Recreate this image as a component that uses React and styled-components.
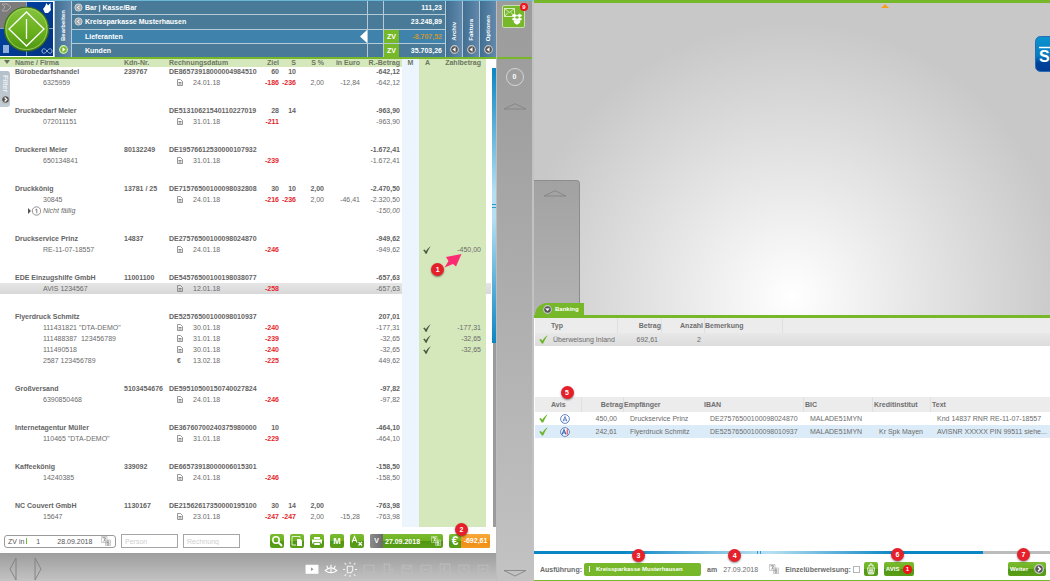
import React from 'react';
import styled, { createGlobalStyle, css } from 'styled-components';

const green = '#76b82a';
const sans = '"Liberation Sans", Arial, sans-serif';

const Global = createGlobalStyle`
  *, *::before, *::after { box-sizing: border-box; }
  body { margin: 0; background: #fff; font: 7px/11px ${sans}; color: #6b6b6b; }
  button, input { font: inherit; color: inherit; margin: 0; padding: 0; border: 0; background: none; border-radius: 0; }
  button { cursor: pointer; }
  svg { display: block; flex: none; }
`;

const Page = styled.div`
  display: grid;
  grid-template-columns: minmax(0, 496fr) 38px minmax(0, 516fr);
  min-height: 100vh;
  overflow: hidden;
`;

/* ---------- left panel ---------- */

const Ledger = styled.section`
  display: flex;
  flex-direction: column;
  min-width: 0;
`;

const TopBar = styled.header`
  display: flex;
  height: 59px;
  border-top: 1px solid #6bb7d6;
  border-bottom: 2px solid ${green};
  background: #b5cbd8;
`;

const LogoBlock = styled.div`
  width: 54px;
  background: #fff;
`;

const SideTab = styled.button`
  display: flex;
  flex-direction: column;
  align-items: center;
  justify-content: flex-end;
  gap: 4px;
  width: 16px;
  padding-bottom: 3px;
  margin-left: 1px;
  background: linear-gradient(90deg, #426f91, #6189ad);
  color: #fff;
  font-size: 6px;
  font-weight: bold;
  line-height: 8px;
`;

const UpText = styled.span`
  writing-mode: vertical-rl;
  transform: rotate(180deg);
`;

const Accounts = styled.div`
  flex: 1;
  display: flex;
  flex-direction: column;
  gap: 1px;
  margin-left: 1px;
`;

const AccountRow = styled.button`
  flex: 1;
  display: grid;
  grid-template-columns: 13px minmax(0, 1fr) 16px 16px 46px;
  align-items: stretch;
  text-align: left;
  background: ${(p) => (p.$active ? '#3f83ac' : '#497a97')};
  color: #fff;
  font-weight: bold;
  line-height: 13px;
`;

const AccountIcon = styled.span`
  display: flex;
  align-items: center;
  justify-content: center;
`;

const Divided = styled.span`
  border-left: 1px solid #b5cbd8;
`;

const AccountName = styled.span`
  display: flex;
  justify-content: space-between;
`;

const Zv = styled.span`
  background: ${(p) => (p.$on ? green : 'transparent')};
  border-left: 1px solid #b5cbd8;
  text-align: center;
`;

const Amount = styled.span`
  text-align: right;
  padding-right: 3px;
  color: ${(p) => (p.$warn ? '#c99636' : '#fff')};
`;

const LedgerBody = styled.div`
  position: relative;
  flex: 1;
  display: flex;
`;

const TableWrap = styled.div`
  flex: 1;
  min-width: 0;
  background: linear-gradient(to left, #fff 5px, #d5e8bb 5px 72px, #ecf5fd 72px 89px, #fff 89px);
`;

const LedgerTable = styled.table`
  width: 100%;
  table-layout: fixed;
  border-collapse: collapse;
  th, td { padding: 0; white-space: nowrap; text-align: right; vertical-align: bottom; }
`;

const HeadCell = styled.th`
  && {
    text-align: ${(p) => p.$align || 'right'};
    padding-left: ${(p) => p.$left || 0}px;
    padding-right: ${(p) => p.$right || 0}px;
  }
  height: 8px;
  line-height: 8px;
  color: #6b7660;
  background: ${(p) => p.$bg || '#d5e8bb'};
`;

const SortMark = styled.span`
  display: inline-block;
  margin: 0 5px 1px 4px;
  border: 3px solid transparent;
  border-top: 4px solid #66705c;
  border-bottom: 0;
`;

const Cell = styled.td`
  && {
    text-align: ${(p) => p.$align || 'right'};
    padding-left: ${(p) => p.$left || 0}px;
    padding-right: ${(p) => p.$right || 0}px;
  }
  color: ${(p) => (p.$red ? '#e5252c' : 'inherit')};
  font-weight: ${(p) => (p.$red ? 'bold' : 'inherit')};
`;

const PartnerRow = styled.tr`
  height: ${(p) => (p.$first ? 10 : 28)}px;
  font-weight: bold;
  line-height: ${(p) => (p.$first ? 10 : 11)}px;
  color: #646464;
`;

const ItemRow = styled.tr`
  height: 11px;
  font-style: ${(p) => (p.$note ? 'italic' : 'normal')};
  ${(p) => p.$selected && css`
    td { background: linear-gradient(#e6e6e6, #d8d8d8); }
    td:nth-child(9) { background: #ecf5fd; }
    td:nth-child(10), td:nth-child(11) { background: #d5e8bb; }
  `}
`;

const DateLine = styled.span`
  display: flex;
  align-items: center;
  padding-left: 8px;
`;

const KindSlot = styled.b`
  width: 16px;
`;

const NoteLine = styled.span`
  display: flex;
  align-items: center;
  padding-left: 27px;
  gap: 2px;
`;

const CheckSlot = styled.span`
  display: flex;
  align-items: center;
  height: 11px;
  padding-left: 4px;
`;

const PayCell = styled.span`
  position: relative;
`;

const FilterTab = styled.button`
  position: absolute;
  left: 0;
  top: 12px;
  display: flex;
  flex-direction: column;
  align-items: center;
  justify-content: space-between;
  width: 10px;
  height: 36px;
  padding: 4px 0 3px;
  border-radius: 0 3px 3px 0;
  background: linear-gradient(#b4c0ca, #c2ccd4);
  color: #eef2f5;
  font-weight: bold;
  line-height: 8px;
  span { writing-mode: vertical-rl; }
`;

const VTrack = styled.div`
  display: flex;
  flex-direction: column;
  width: 5px;
  margin-top: 9px;
  padding-left: 1px;
  background: linear-gradient(90deg, #fff 2px, #9b9b9b 2px);
`;

const VThumb = styled.div`
  display: flex;
  flex-direction: column;
  justify-content: center;
  height: 60%;
  background: linear-gradient(#0b86c4, #b4def1 45%, #b4def1 55%, #0b86c4);
  &::after {
    content: '';
    height: 4px;
    border: solid #2d9bd0;
    border-width: 1px 0;
  }
`;

const ToolBar = styled.form`
  display: flex;
  align-items: center;
  height: 26px;
  padding: 2px 6px 0 4px;
`;

const ZvBox = styled.div`
  display: flex;
  align-items: center;
  width: 112px;
  height: 13px;
  padding: 0 3px;
  border: 1px solid #9a9a9a;
  border-radius: 3px;
  color: #555;
  white-space: nowrap;
`;

const GreenTick = styled.span`
  width: 1px;
  height: 6px;
  margin: 0 9px 0 2px;
  background: ${green};
`;

const PlainInput = styled.input`
  width: ${(p) => p.$w}px;
  height: 11px;
  outline: 0;
  margin-right: ${(p) => p.$gap || 0}px;
`;

const IconButton = styled.button`
  display: flex;
`;

const SearchInput = styled.input`
  && {
    width: 57px;
    height: 14px;
    margin-left: 5px;
    padding: 0 3px;
    border: 1px solid #a5a5a5;
  }
  &::placeholder { color: #cfcfcf; opacity: 1; }
`;

const Actions = styled.div`
  display: flex;
  gap: 6px;
  margin-left: auto;
`;

const greenFace = css`
  background: linear-gradient(#7cbb32, #6bb01e 50%, #519614 52%, #5b9f18);
  color: #fff;
  border-radius: 2px;
`;

const ToolButton = styled.button`
  && { ${greenFace} }
  display: flex;
  align-items: center;
  justify-content: center;
  width: 14px;
  height: 14px;
  && { font-size: 9px; font-weight: bold; }
`;

const DateButton = styled.button`
  && { ${greenFace} font-weight: bold; }
  display: flex;
  align-items: center;
  width: 73px;
  height: 14px;
  overflow: hidden;
  span { flex: 1; text-align: left; padding-left: 2px; }
  svg { margin-right: 2px; }
`;

const ModeMark = styled.b`
  width: 13px;
  line-height: 14px;
  background: linear-gradient(90deg, #8b8b8b, #6b6b6b);
`;

const PayButton = styled.button`
  && { ${greenFace} font-weight: bold; line-height: 14px; }
  position: relative;
  display: flex;
  width: 41px;
  height: 14px;
`;

const EuroMark = styled.span`
  width: 12px;
  font-size: 12px;
`;

const PayTotal = styled.span`
  flex: 1;
  background: linear-gradient(#f8a93d, #f59a1f 50%, #f08a10 52%, #f39a22);
  border-radius: 0 2px 2px 0;
`;

const Dock = styled.footer`
  display: flex;
  align-items: center;
  justify-content: space-between;
  height: 28px;
  padding: 4px 6px 0 9px;
  background: linear-gradient(#9d9d9d, #c3c3c3);
`;

const DockArrows = styled.div`
  display: flex;
  gap: 17px;
`;

const DockIcons = styled.div`
  display: flex;
  align-items: center;
  gap: 5px;
`;

/* ---------- middle rail ---------- */

const Rail = styled.aside`
  display: flex;
  flex-direction: column;
  border-left: 1px solid #bdbdbd;
  border-right: 2px solid #c2c2c2;
  border-top: 1px solid #6bb7d6;
  background: linear-gradient(#9c9c9c, #a0a0a0 20%, #c3c3c3);
`;

const RailTop = styled.div`
  height: 58px;
  padding: 4px 0 0 5px;
  border-bottom: 2px solid ${green};
`;

const MailButton = styled.button`
  && {
    position: relative;
    display: block;
    width: 23px;
    height: 23px;
    border: 1px solid #c9dcb3;
    border-radius: 2px;
    background: ${green};
  }
`;

const MailCount = styled.span`
  position: absolute;
  right: -4px;
  top: -3px;
  width: 8px;
  height: 8px;
  border-radius: 50%;
  background: #f0101a;
  color: #fff;
  font-size: 6px;
  font-weight: bold;
  line-height: 8px;
  text-align: center;
`;

const RailList = styled.div`
  flex: 1;
  display: flex;
  flex-direction: column;
  align-items: center;
  padding: 9px 0 4px;
  gap: 17px;
`;

const Counter = styled.span`
  width: 18px;
  height: 18px;
  border: 1px solid #d5d5d5;
  border-radius: 50%;
  color: #fff;
  font-weight: bold;
  line-height: 16px;
  text-align: center;
`;

const Bottom = styled.div`
  margin-top: auto;
`;

/* ---------- right panel ---------- */

const Workspace = styled.section`
  display: flex;
  flex-direction: column;
  min-width: 0;
  border-bottom: 1px solid ${green};
`;

const Stage = styled.div`
  position: relative;
  height: 315px;
  overflow: hidden;
  border-top: 3px solid ${green};
  background: radial-gradient(circle 275px at 50% 294px, #fff, #c8c8c8);
  &::before {
    content: '';
    position: absolute;
    top: -3px;
    left: 0;
    right: 0;
    height: 1px;
    background: #35a08c;
  }
`;

const Pointer = styled.span`
  position: absolute;
  top: 1px;
  left: 68%;
  margin-left: -4px;
  border: 4px solid transparent;
  border-top: 0;
  border-bottom: 4px solid #f9a01b;
`;

const Drawer = styled.div`
  position: absolute;
  left: 0;
  bottom: 0;
  display: flex;
  justify-content: center;
  width: 46px;
  height: 135px;
  padding: 9px 3px 0 0;
  border: 1px solid #8d8d8d;
  border-left: 0;
  border-bottom: 0;
  border-radius: 0 4px 0 0;
  background: linear-gradient(#a2a2a2, #b3b3b3);
`;

const BankLogo = styled.div`
  position: absolute;
  right: -20px;
  top: 33px;
`;

const BankingTab = styled.button`
  && {
    position: absolute;
    left: 1px;
    bottom: 0;
    display: flex;
    align-items: center;
    gap: 3px;
    width: 49px;
    height: 12px;
    padding-left: 8px;
    border-radius: 12px 0 0 0;
    background: ${green};
    color: #fff;
    font-size: 6px;
    font-weight: bold;
  }
`;

const Lists = styled.div`
  flex: 1;
  border-top: 3px solid ${green};
  padding-left: 1px;
`;

const TypeArea = styled.div`
  min-height: 79px;
`;

const GridTable = styled.table`
  width: 100%;
  table-layout: fixed;
  border-collapse: collapse;
  th, td { padding: 0; white-space: nowrap; }
`;

const GridHead = styled.th`
  position: relative;
  height: 15px;
  background: #ececec;
  color: #6f6f6f;
  && {
    text-align: ${(p) => p.$align || 'left'};
    padding-left: ${(p) => p.$left || 0}px;
    padding-right: ${(p) => p.$right || 0}px;
  }
  box-shadow: ${(p) => (p.$rule ? 'inset -1px 0 #e0e0e0' : 'none')};
`;

const GridRow = styled.tr`
  height: 13px;
  background: ${(p) => (p.$tone === 'gray' ? 'linear-gradient(#e8e8e8, #dcdcdc)' : p.$tone === 'blue' ? '#dcebf8' : '#fff')};
`;

const GridCell = styled.td`
  overflow: hidden;
  && {
    text-align: ${(p) => p.$align || 'left'};
    padding-left: ${(p) => p.$left || 0}px;
    padding-right: ${(p) => p.$right || 0}px;
  }
`;

const HTrack = styled.div`
  height: 3px;
  background: #bcbcbc;
`;

const HThumb = styled.div`
  display: flex;
  justify-content: center;
  width: 87%;
  height: 3px;
  background: linear-gradient(90deg, #0b86c4 20%, #b4def1 50%, #b4def1 53%, #0b86c4 80%);
  &::after {
    content: '';
    width: 4px;
    margin-left: 2px;
    border: solid #2d9bd0;
    border-width: 0 1px;
  }
`;

const PayBar = styled.form`
  display: flex;
  align-items: center;
  height: 26px;
  padding: 4px 4px 0 6px;
  font-weight: bold;
`;

const BankButton = styled.button`
  && {
    ${greenFace}
    position: relative;
    display: flex;
    align-items: center;
    gap: 6px;
    width: 117px;
    height: 13px;
    margin: 0 6px 0 2px;
    padding-left: 5px;
    background: ${green};
    font-size: 6px;
    font-weight: bold;
  }
  &::before { content: ''; width: 1px; height: 6px; background: #fff; }
`;

const DateField = styled.span`
  position: relative;
  display: flex;
  margin: 0 8px 0 6px;
  font-weight: normal;
`;

const SingleLabel = styled.label`
  margin-left: 6px;
`;

const CheckBox = styled.input`
  && {
    appearance: none;
    width: 7px;
    height: 7px;
    margin: 0 4px 0 2px;
    border: 1px solid #b5b5b5;
    background: #fff;
  }
`;

const SmallButton = styled.button`
  && {
    ${greenFace}
    position: relative;
    display: flex;
    align-items: center;
    justify-content: space-between;
    width: ${(p) => p.$w}px;
    height: 14px;
    padding: 0 2px;
    margin-left: ${(p) => (p.$end ? 'auto' : '0')};
    margin-right: ${(p) => (p.$end ? 0 : 6)}px;
    font-size: 6px;
    font-weight: bold;
  }
`;

const Alert = styled.i`
  width: 9px;
  height: 9px;
  border-radius: 50%;
  background: #f0101a;
  font-style: normal;
  line-height: 9px;
  text-align: center;
`;

const Badge = styled.span`
  position: absolute;
  left: ${(p) => p.$x};
  top: ${(p) => p.$y}px;
  z-index: 2;
  width: 13px;
  height: 13px;
  margin-left: -6px;
  border-radius: 50%;
  background: #e5202a;
  box-shadow: 0 1px 2px rgba(0, 0, 0, 0.45);
  color: #fff;
  font-size: 7px;
  font-style: normal;
  font-weight: bold;
  line-height: 13px;
  text-align: center;
`;

const ArrowHolder = styled.span`
  position: absolute;
  left: -14px;
  top: 7px;
`;

/* ---------- icons ---------- */

const Knob = ({ dir = 'left', size = 9, fill = '#555', ring = '#c9c9c9' }) => {
  const d = {
    left: 'M6 2.8 3 5l3 2.2z',
    right: 'M4 2.8 7 5 4 7.2z',
    chevron: 'M4 2.8 6.4 5 4 7.2',
    down: 'M2.8 4 5 6.6 7.2 4z',
  }[dir];
  return (
    <svg width={size} height={size} viewBox="0 0 10 10">
      <circle cx="5" cy="5" r="4.3" fill={fill} stroke={ring} strokeWidth="1.2" />
      <path d={d} fill={dir === 'chevron' ? 'none' : '#fff'} stroke="#fff" strokeWidth={dir === 'chevron' ? 1.4 : 0.3} />
    </svg>
  );
};

const Coin = () => (
  <svg width="9" height="9" viewBox="0 0 9 9">
    <circle cx="4.5" cy="4.5" r="3.6" fill="#a3a9ac" stroke="#cfd6da" />
    <path d="M5.6 2.8 3.4 4.5l2.2 1.7" fill="none" stroke="#fff" />
  </svg>
);

const Logo = () => (
  <svg width="54" height="56" viewBox="0 0 54 56">
    <defs>
      <linearGradient id="lg" x1="0" y1="0" x2="0" y2="1">
        <stop offset="0" stopColor="#86c440" />
        <stop offset=".5" stopColor="#6cb31f" />
        <stop offset="1" stopColor="#4f9712" />
      </linearGradient>
      <linearGradient id="lb" x1="0" y1="0" x2="1" y2="1">
        <stop offset="0" stopColor="#0046a8" />
        <stop offset="1" stopColor="#023380" />
      </linearGradient>
    </defs>
    <path d="M0 1h26v26H0z" fill="#7c7c7c" />
    <path d="M26.500 1h26.500v26H26.500zM0 27.500h26v27.500H0zM26.500 27.500h26.500v27.500H26.500z" fill="url(#lb)" />
    <path d="M2 3h5l4 3-4 4H2l3-4z" fill="none" stroke="#aaa" />
    <path d="M45 5.500 46.500 2l1.500 2.500L50.500 2v4.500L51 9l-3 3h-3l-2-4z" fill="#fff" />
    <path d="M3 44h6v8H3z" fill="#8fb0dd" />
    <path d="M42 50c0-3 3-3 5 0s5 3 5 0-3-3-5 0-5 3-5 0z" fill="none" stroke="#9cb8e0" />
    <circle cx="26.5" cy="28" r="22" fill="url(#lg)" stroke="#3f6c17" strokeWidth="1.2" />
    <circle cx="26.5" cy="28" r="20.5" fill="none" stroke="#a5d56c" strokeWidth=".8" />
    <path d="M26.500 11 44 28 26.500 45 9 28z" fill="none" stroke="#fff" strokeWidth="1.3" />
    <path d="M26.500 18v20" stroke="#fff" strokeWidth="1.3" />
  </svg>
);

const Doc = () => (
  <svg width="6" height="7" viewBox="0 0 6 7">
    <path d="M.5.5h3l2 2v4h-5z" fill="none" stroke="#7d7d7d" strokeWidth=".8" />
    <path d="M1.500 3.500h3M1.500 5h3" stroke="#777" strokeWidth=".9" />
  </svg>
);

const Tick = ({ color = '#4d5a44', size = 8 }) => (
  <svg width={size} height={size} viewBox="0 0 9 9">
    <path d="M.2 4.800 1.900 4 3.300 5.800C4.600 3.600 6.400 1.500 8.800.2 7.200 2.500 5.500 5.200 4.200 8.600H2.800C2.100 7.200 1.200 5.900.2 4.800z" fill={color} />
  </svg>
);

const Calendar = ({ color = '#888', bg = '#fff' }) => (
  <svg width="10" height="10" viewBox="0 0 10 10">
    <path d="M.5.5h5.500v6H.5zM4.500 4h5v5.500h-5z" fill={bg} stroke={color} strokeWidth=".6" opacity=".7" />
    <path d="M1.500 1.800h3L2.800 5.600" fill="none" stroke={color} />
    <circle cx="7" cy="5.800" r="1" fill="none" stroke={color} strokeWidth=".8" />
    <circle cx="7" cy="7.900" r="1.100" fill="none" stroke={color} strokeWidth=".8" />
  </svg>
);

const Roof = ({ flip }) => (
  <svg width="24" height="7" viewBox="0 0 24 7">
    <path d={flip ? 'M1 .5h22L12 6z' : 'M1 6h22L12 .7z'} fill="none" stroke="#858585" strokeWidth=".9" />
  </svg>
);

const Spike = ({ flip }) => (
  <svg width="8" height="24" viewBox="0 0 8 24">
    <path d={flip ? 'M1 1v22l6-11z' : 'M7 1v22L1 12z'} fill="none" stroke="#808080" strokeWidth=".9" />
  </svg>
);

const CircleA = ({ mark }) => (
  <svg width="10" height="10" viewBox="0 0 10 10">
    <circle cx="5" cy="5" r="4.4" fill="#fff" stroke="#3d68b8" strokeWidth=".8" />
    <path d={mark ? 'M2 7.500 4 2.500l2 5M2.800 6h2.500' : 'M3 7.500 5 2.500l2 5M3.700 6h2.600'} fill="none" stroke="#3d68b8" strokeWidth={mark ? 1.1 : 0.8} />
    {mark && <path d="M7.200 2.200v5.500" stroke="#c8323c" />}
  </svg>
);

const dock = [
  ['M1 2h11v7.500H1z', true],
  ['M1 7q5.500-5 11 0-5.500 4-11 0zM6.500 5.500v3M6.500 4V1.500M3.500 4.500l-1-2M9.500 4.500l1-2', false, '#fff'],
  ['M4 3h5v4L7.500 9H4zM6.500-1v2M1.500 0l1.500 1.500M11.500 0 10 1.500M0 6h2M11 6h2M1.500 12 3 10.500M11.500 12 10 10.500M6.500 11v2', false, '#f2f2f2'],
  ['M2 2h9v7H2z'],
  ['M3 1h5v9H3zM8 6h3v4H6'],
  ['M2 2h9v8H2zM4 2v3h5V2'],
  ['M2 2h9v8H2zM4 6h5'],
  ['M2 1h9v9H2zM8 3.500q-3-1-3 2t3 2M4 5.500h3'],
  ['M2 2h9v8H2zM6.500 4v3M5 5.500h3'],
  ['M2 2h9v7H2zM4 7l2-2 3 1'],
];

/* ---------- data ---------- */

const accounts = [
  { name: 'Bar | Kasse/Bar', sum: '111,23', coin: true },
  { name: 'Kreissparkasse Musterhausen', sum: '23.248,89', coin: true },
  { name: 'Lieferanten', sum: '-8.707,52', zv: true, active: true },
  { name: 'Kunden', sum: '35.703,26', zv: true },
];

const partners = [
  { n: 'Bürobedarfshandel', k: '239767', i: 'DE86573918000004984510', z: '60', s: '10', r: '-642,12',
    items: [{ n: '6325959', d: '24.01.18', z: '-186', s: '-236', p: '2,00', e: '-12,84', r: '-642,12' }] },
  { n: 'Druckbedarf Meier', i: 'DE51310621540110227019', z: '28', s: '14', r: '-963,90',
    items: [{ n: '072011151', d: '31.01.18', z: '-211', r: '-963,90' }] },
  { n: 'Druckerei Meier', k: '80132249', i: 'DE19576612530000107932', r: '-1.672,41',
    items: [{ n: '650134841', d: '31.01.18', z: '-239', r: '-1.672,41' }] },
  { n: 'Druckkönig', k: '13781 / 25', i: 'DE71576500100098032808', z: '30', s: '10', p: '2,00', r: '-2.470,50',
    items: [
      { n: '30845', d: '24.01.18', z: '-216', s: '-236', p: '2,00', e: '-46,41', r: '-2.320,50' },
      { n: 'Nicht fällig', note: true, r: '-150,00' },
    ] },
  { n: 'Druckservice Prinz', k: '14837', i: 'DE27576500100098024870', r: '-949,62',
    items: [{ n: 'RE-11-07-18557', d: '24.01.18', z: '-246', r: '-949,62', pay: '-450,00', callout: true }] },
  { n: 'EDE Einzugshilfe GmbH', k: '11001100', i: 'DE54576500100198038077', r: '-657,63',
    items: [{ n: 'AVIS 1234567', d: '12.01.18', z: '-258', r: '-657,63', selected: true }] },
  { n: 'Flyerdruck Schmitz', i: 'DE52576500100098010937', r: '207,01',
    items: [
      { n: '111431821 "DTA-DEMO"', d: '30.01.18', z: '-240', r: '-177,31', pay: '-177,31' },
      { n: '111488387\u00a0 123456789', d: '31.01.18', z: '-239', r: '-32,65', pay: '-32,65' },
      { n: '111490518', d: '30.01.18', z: '-240', r: '-32,65', pay: '-32,65' },
      { n: '2587 123456789', d: '13.02.18', z: '-225', r: '449,62', euro: true },
    ] },
  { n: 'Großversand', k: '5103454676', i: 'DE59510500150740027824', r: '-97,82',
    items: [{ n: '6390850468', d: '24.01.18', z: '-246', r: '-97,82' }] },
  { n: 'Internetagentur Müller', i: 'DE36760700240375980000', z: '10', r: '-464,10',
    items: [{ n: '110465 "DTA-DEMO"', d: '31.01.18', z: '-229', r: '-464,10' }] },
  { n: 'Kaffeekönig', k: '339092', i: 'DE66573918000006015301', r: '-158,50',
    items: [{ n: '14240385', d: '24.01.18', z: '-246', r: '-158,50' }] },
  { n: 'NC Couvert GmbH', k: '1130167', i: 'DE21562617350000195100', z: '30', s: '14', p: '2,00', r: '-763,98',
    items: [{ n: '15647', d: '23.01.18', z: '-247', s: '-247', p: '2,00', e: '-15,28', r: '-763,98' }] },
];

const ledgerCols = [undefined, 45, 88, 22, 17, 28, 36, 42, 17, 20, 47, 5];
const typeCols = [16, 67, 44, 43, 78, undefined];
const payCols = [16, 31, 42, 80, 100, 69, 58, undefined];

const Cols = ({ widths }) => (
  <colgroup>{widths.map((w, i) => <col key={i} width={w} />)}</colgroup>
);

const Item = ({ item }) => (
  <ItemRow $selected={item.selected} $note={item.note}>
    <Cell $align="left" $left={item.note ? 0 : 43}>
      {item.note ? (
        <NoteLine>
          <svg width="14" height="10" viewBox="0 0 14 10">
            <path d="M1 2 4 5 1 8z" fill="#555" />
            <circle cx="9.5" cy="5" r="4.2" fill="none" stroke="#777" strokeWidth=".8" />
            <path d="M8.300 4 9.800 3v4.400" fill="none" stroke="#666" strokeWidth=".8" />
          </svg>
          {item.n}
        </NoteLine>
      ) : item.n}
    </Cell>
    <Cell />
    <Cell $align="left">
      {item.d && <DateLine><KindSlot>{item.euro ? '€' : <Doc />}</KindSlot>{item.d}</DateLine>}
    </Cell>
    <Cell $red>{item.z}</Cell>
    <Cell $red>{item.s}</Cell>
    <Cell>{item.p}</Cell>
    <Cell>{item.e}</Cell>
    <Cell $right={2}>{item.r}</Cell>
    <Cell />
    <Cell>{item.pay && <CheckSlot><Tick /></CheckSlot>}</Cell>
    <Cell $right={5}>
      <PayCell>
        {item.pay}
        {item.callout && (
          <ArrowHolder>
            <svg width="20" height="15" viewBox="0 0 20 15">
              <path d="M18.500 1 13 13.500l-3-2.500-8.500 3.500 4-6.500-2.500-4z" fill="#fb2c72" />
            </svg>
          </ArrowHolder>
        )}
        {item.callout && <Badge $x="-20px" $y={17}>1</Badge>}
      </PayCell>
    </Cell>
    <Cell />
  </ItemRow>
);

export default function App() {
  return (
    <Page>
      <Global />
      <Ledger>
        <TopBar>
          <LogoBlock><Logo /></LogoBlock>
          <SideTab type="button"><UpText>Bearbeiten</UpText><Knob dir="right" fill={green} ring="#d8ecc0" /></SideTab>
          <Accounts>
            {accounts.map((a) => (
              <AccountRow type="button" key={a.name} $active={a.active}>
                <AccountIcon>{a.coin && <Coin />}</AccountIcon>
                <AccountName>
                  {a.name}
                  {a.active && <svg width="7" height="13" viewBox="0 0 7 13"><path d="M7 0v13L0 6.500z" fill="#fff" /></svg>}
                </AccountName>
                <Divided />
                <Zv $on={a.zv}>{a.zv && 'ZV'}</Zv>
                <Amount $warn={a.active}>{a.sum}</Amount>
              </AccountRow>
            ))}
          </Accounts>
          {['Archiv', 'Faktura', 'Optionen'].map((t) => (
            <SideTab type="button" key={t}><UpText>{t}</UpText><Knob /></SideTab>
          ))}
        </TopBar>

        <LedgerBody>
          <TableWrap>
            <LedgerTable>
              <Cols widths={ledgerCols} />
              <thead>
                <tr>
                  <HeadCell $align="left"><SortMark />Name / Firma</HeadCell>
                  <HeadCell $align="left">Kdn-Nr.</HeadCell>
                  <HeadCell $align="left">Rechnungsdatum</HeadCell>
                  <HeadCell>Ziel</HeadCell>
                  <HeadCell>S</HeadCell>
                  <HeadCell>S %</HeadCell>
                  <HeadCell>in Euro</HeadCell>
                  <HeadCell $right={2}>R.-Betrag</HeadCell>
                  <HeadCell $align="center" $bg="#ecf5fd">M</HeadCell>
                  <HeadCell $align="left" $left={6}>A</HeadCell>
                  <HeadCell $right={5}>Zahlbetrag</HeadCell>
                  <HeadCell $bg="#fff" />
                </tr>
              </thead>
              {partners.map((p, i) => (
                <tbody key={p.n}>
                  <PartnerRow $first={i === 0}>
                    <Cell $align="left" $left={15}>{p.n}</Cell>
                    <Cell $align="left">{p.k}</Cell>
                    <Cell $align="left">{p.i}</Cell>
                    <Cell>{p.z}</Cell>
                    <Cell>{p.s}</Cell>
                    <Cell>{p.p}</Cell>
                    <Cell />
                    <Cell $right={2}>{p.r}</Cell>
                    <Cell />
                    <Cell />
                    <Cell />
                    <Cell />
                  </PartnerRow>
                  {p.items.map((it) => <Item key={it.n} item={it} />)}
                </tbody>
              ))}
            </LedgerTable>
          </TableWrap>
          <VTrack><VThumb /></VTrack>
          <FilterTab type="button"><span>Filter</span><Knob dir="chevron" size={9} /></FilterTab>
        </LedgerBody>

        <ToolBar>
          <ZvBox>
            <label htmlFor="zv">ZV in</label>
            <GreenTick />
            <PlainInput id="zv" $w={12} $gap={9} defaultValue="1" />
            <PlainInput aria-label="Datum" $w={38} $gap={6} defaultValue="28.09.2018" />
            <IconButton type="button" aria-label="Kalender"><Calendar /></IconButton>
          </ZvBox>
          <SearchInput placeholder="Person" aria-label="Person" />
          <SearchInput placeholder="Rechnung" aria-label="Rechnung" />
          <Actions>
            <ToolButton type="button" aria-label="Suchen">
              <svg width="12" height="12" viewBox="0 0 12 12"><circle cx="5" cy="5" r="3.2" fill="none" stroke="#fff" strokeWidth="1.5" /><path d="M7.500 7.500 11 11" stroke="#fff" strokeWidth="1.8" /></svg>
            </ToolButton>
            <ToolButton type="button" aria-label="Kopieren">
              <svg width="12" height="12" viewBox="0 0 12 12"><path d="M5 10H1V1.500h8V3" fill="none" stroke="#dff0cc" /><path d="M6 4h3.500L11 5.500V11H6z" fill="#fff" /></svg>
            </ToolButton>
            <ToolButton type="button" aria-label="Drucken">
              <svg width="12" height="12" viewBox="0 0 12 12"><path d="M3 2h6v2H3zM1 4.500h10v4H9.500V7h-7v1.500H1zM3.200 7.700h5.600v2.300H3.200z" fill="#fff" /></svg>
            </ToolButton>
            <ToolButton type="button">M</ToolButton>
            <ToolButton type="button" aria-label="Sortierung">
              <svg width="12" height="12" viewBox="0 0 12 12"><path d="M1 7.500 3.500 1.500 6 7.500M2 5.500h3M7.500 7l3.500 3.500M11 7l-3.500 3.500" fill="none" stroke="#fff" strokeWidth="1.1" /></svg>
            </ToolButton>
            <DateButton type="button"><ModeMark>V</ModeMark><span>27.09.2018</span><Calendar color="#fff" bg="none" /></DateButton>
            <PayButton type="button"><EuroMark>€</EuroMark><PayTotal>-692,61</PayTotal><Badge $x="12px" $y={-11}>2</Badge></PayButton>
          </Actions>
        </ToolBar>

        <Dock>
          <DockArrows><Spike /><Spike flip /></DockArrows>
          <DockIcons>
            {dock.map(([d, filled, color], i) => (
              <svg key={i} width="14" height="13" viewBox="0 0 13 12" overflow="visible">
                <path d={d} fill={filled ? '#fff' : 'none'} stroke={filled ? '#fff' : color || '#bcbcbc'} strokeLinejoin="round" />
                {filled && <path d="M5.500 4v3.400l2.500-1.700z" fill="#999" />}
              </svg>
            ))}
          </DockIcons>
        </Dock>
      </Ledger>

      <Rail>
        <RailTop>
          <MailButton type="button" aria-label="Post">
            <svg width="21" height="21" viewBox="0 0 21 21">
              <path d="M1.500 2.500h10v8h-10zM1.500 2.500l5 4 5-4M1.500 10.500l3.500-4M11.500 10.500 8 6.500" fill="none" stroke="#e3f2d0" strokeWidth=".9" />
              <path d="M11.500 8 14 9.600l-2.500 1.700L9 9.600zM16.500 8 19 9.600l-2.500 1.700L14 9.600zM11.500 11.500 14 13.200l-2.500 1.600L9 13.200zM16.500 11.500 19 13.200l-2.500 1.600L14 13.200zM11 15.200l3-1.500 3 1.500v1.300L14 18.500l-3-2z" fill="#fff" stroke="#fff" strokeWidth=".5" />
            </svg>
            <MailCount>9</MailCount>
          </MailButton>
        </RailTop>
        <RailList>
          <Counter>0</Counter>
          <Roof />
          <Bottom><Roof flip /></Bottom>
        </RailList>
      </Rail>

      <Workspace>
        <Stage>
          <Pointer />
          <BankLogo>
            <svg width="35" height="36" viewBox="0 0 35 36">
              <defs>
                <linearGradient id="bk" x1="0" y1="0" x2="0" y2="1">
                  <stop offset="0" stopColor="#0a93cf" /><stop offset=".55" stopColor="#0a7cc0" />
                  <stop offset=".75" stopColor="#00439b" /><stop offset="1" stopColor="#003c96" />
                </linearGradient>
              </defs>
              <rect x=".5" y=".5" width="34" height="35" rx="5" fill="url(#bk)" stroke="#2a6cb4" />
              <path d="M4 11.500h28" stroke="#fff" strokeWidth="1.5" />
              <text x="4" y="26" fill="#fff" fontFamily="Liberation Sans, sans-serif" fontWeight="bold" fontSize="16">S</text>
            </svg>
          </BankLogo>
          <Drawer><Roof /></Drawer>
          <BankingTab type="button"><Knob dir="down" />Banking</BankingTab>
        </Stage>

        <Lists>
          <TypeArea>
            <GridTable>
              <Cols widths={typeCols} />
              <thead>
                <tr>
                  <GridHead />
                  <GridHead $rule>Typ</GridHead>
                  <GridHead $rule $align="right" $right={1}>Betrag</GridHead>
                  <GridHead $rule $align="right" $right={2}>Anzahl</GridHead>
                  <GridHead $rule>Bemerkung</GridHead>
                  <GridHead />
                </tr>
              </thead>
              <tbody>
                <GridRow $tone="gray">
                  <GridCell $left={4}><Tick color="#6cb52a" size={9} /></GridCell>
                  <GridCell $left={2}>Überweisung Inland</GridCell>
                  <GridCell $align="right" $right={4}>692,61</GridCell>
                  <GridCell $align="right" $right={4}>2</GridCell>
                  <GridCell />
                  <GridCell />
                </GridRow>
              </tbody>
            </GridTable>
          </TypeArea>
          <GridTable>
            <Cols widths={payCols} />
            <thead>
              <tr>
                <GridHead />
                <GridHead $rule>Avis<Badge $x="50%" $y={-11}>5</Badge></GridHead>
                <GridHead $rule $align="right" $right={1}>Betrag</GridHead>
                <GridHead>Empfänger</GridHead>
                <GridHead $rule>IBAN</GridHead>
                <GridHead $rule $left={1}>BIC</GridHead>
                <GridHead $rule $left={1}>Kreditinstitut</GridHead>
                <GridHead $left={1}>Text</GridHead>
              </tr>
            </thead>
            <tbody>
              <GridRow>
                <GridCell $left={4}><Tick color="#6cb52a" size={9} /></GridCell>
                <GridCell $left={9}><CircleA /></GridCell>
                <GridCell $align="right" $right={7}>450,00</GridCell>
                <GridCell $left={6}>Druckservice Prinz</GridCell>
                <GridCell $left={6}>DE27576500100098024870</GridCell>
                <GridCell $left={6}>MALADE51MYN</GridCell>
                <GridCell />
                <GridCell $left={6}>Knd 14837 RNR RE-11-07-18557</GridCell>
              </GridRow>
              <GridRow $tone="blue">
                <GridCell $left={4}><Tick color="#6cb52a" size={9} /></GridCell>
                <GridCell $left={9}><CircleA mark /></GridCell>
                <GridCell $align="right" $right={7}>242,61</GridCell>
                <GridCell $left={6}>Flyerdruck Schmitz</GridCell>
                <GridCell $left={6}>DE52576500100098010937</GridCell>
                <GridCell $left={6}>MALADE51MYN</GridCell>
                <GridCell $left={6}>Kr Spk Mayen</GridCell>
                <GridCell $left={6}>AVISNR XXXXX PIN 99511 siehe...</GridCell>
              </GridRow>
            </tbody>
          </GridTable>
        </Lists>

        <HTrack><HThumb /></HTrack>
        <PayBar>
          <span>Ausführung:</span>
          <BankButton type="button">Kreissparkasse Musterhausen<Badge $x="54px" $y={-14}>3</Badge></BankButton>
          <label htmlFor="due">am</label>
          <DateField><PlainInput id="due" $w={38} defaultValue="27.09.2018" /><Badge $x="11px" $y={-15}>4</Badge></DateField>
          <IconButton type="button" aria-label="Kalender"><Calendar /></IconButton>
          <SingleLabel htmlFor="single">Einzelüberweisung:</SingleLabel>
          <CheckBox id="single" type="checkbox" />
          <SmallButton type="button" $w={14} aria-label="Löschen">
            <svg width="10" height="12" viewBox="0 0 10 12"><path d="M1 5h8M1.500 5.500 2.500 11h5l1-5.500M2.800 7.200h4.400M3 9.200h4M4 6v5M6 6v5M3 4V2h4v2M4 1h2" fill="none" stroke="#fff" strokeWidth=".9" /></svg>
          </SmallButton>
          <SmallButton type="button" $w={30}>AVIS<Alert>1</Alert><Badge $x="13px" $y={-14}>6</Badge></SmallButton>
          <SmallButton type="button" $w={38} $end>Weiter<Knob dir="chevron" size={10} /><Badge $x="15px" $y={-14}>7</Badge></SmallButton>
        </PayBar>
      </Workspace>
    </Page>
  );
}
